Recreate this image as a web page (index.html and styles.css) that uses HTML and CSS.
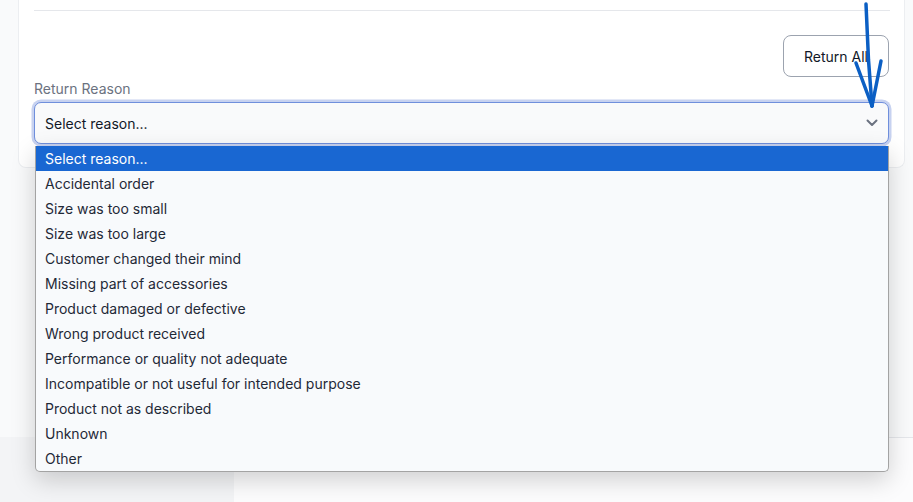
FILE: index.html
```html
<!DOCTYPE html>
<html lang="en">
<head>
<meta charset="utf-8">
<title>Return Reason</title>
<link rel="stylesheet" href="styles.css">
</head>
<body>
<div class="page">
  <div class="card">
    <div class="divider"></div>
    <div class="actions">
      <button class="btn">Return All</button>
    </div>
    <label class="label">Return Reason</label>
    <div class="select-wrap">
      <div class="select">
        <span>Select reason...</span>
        <svg class="chev" width="12" height="8" viewBox="0 0 12 8"><path d="M1.5 1.5 L6 6 L10.5 1.5" fill="none" stroke="#6b7280" stroke-width="2" stroke-linecap="round" stroke-linejoin="round"/></svg>
      </div>
      <ul class="menu">
        <li class="active">Select reason...</li>
        <li>Accidental order</li>
        <li>Size was too small</li>
        <li>Size was too large</li>
        <li>Customer changed their mind</li>
        <li>Missing part of accessories</li>
        <li>Product damaged or defective</li>
        <li>Wrong product received</li>
        <li>Performance or quality not adequate</li>
        <li>Incompatible or not useful for intended purpose</li>
        <li>Product not as described</li>
        <li>Unknown</li>
        <li>Other</li>
      </ul>
    </div>
  </div>
  <div class="lower">
    <div class="side"></div>
    <div class="panel"></div>
  </div>
  <svg class="annot" width="913" height="130" viewBox="0 0 913 130">
    <g fill="none" stroke="#0b5fc4" stroke-width="3.5" stroke-linecap="round" stroke-linejoin="round">
      <path d="M866 4 L868.5 60 L872 106"/>
      <path d="M856 63 L872 106"/>
      <path d="M881 61 L872 106"/>
    </g>
  </svg>
</div>
</body>
</html>
```
FILE: styles.css
```css
* { box-sizing: border-box; }
html, body { margin: 0; padding: 0; }
body {
  font-family: Inter, "Noto Sans", "Liberation Sans", sans-serif;
  background: #f9fafb;
  color: #111827;
}
.page {
  position: relative;
  width: 913px;
  height: 502px;
  overflow: hidden;
  background: #f9fafb;
}
.card {
  margin: 0 8px 0 18px;
  background: #fff;
  border: 1px solid #eceef1;
  border-top: none;
  border-radius: 0 0 8px 8px;
  padding: 10px 15px 23px 15px;
  height: 168px;
}
.divider {
  height: 1px;
  background: #e5e7eb;
  margin-right: -1px;
}
.actions {
  display: flex;
  justify-content: flex-end;
  margin-top: 24px;
}
.btn {
  height: 42px;
  width: 106px;
  border: 1px solid #9ca3af;
  border-radius: 8px;
  background: #fff;
  font-family: inherit;
  font-size: 14px;
  color: #111827;
  padding: 0;
}
.label {
  display: block;
  font-size: 14px;
  line-height: 20px;
  color: #6b7280;
  margin-top: 2px;
}
.select-wrap {
  position: relative;
  margin-top: 3px;
}
.select {
  height: 42px;
  border: 1px solid #6f8fdc;
  border-radius: 7px;
  background: #f9fafb;
  box-shadow: 0 0 0 2.5px #c7d2f0;
  display: flex;
  align-items: center;
  justify-content: space-between;
  padding: 0 10px 0 10px;
  font-size: 14px;
  color: #111827;
}
.chev { display: block; }
.menu {
  position: absolute;
  left: 1px;
  top: 44px;
  width: 854px;
  margin: 0;
  padding: 0;
  list-style: none;
  background: #f8fafc;
  border: 1px solid #a3a3a3;
  border-top: none;
  border-radius: 0 0 5px 5px;
  box-shadow: 0 8px 24px rgba(0,0,0,0.18);
  z-index: 5;
}
.menu li {
  height: 25px;
  line-height: 25px;
  padding-left: 9px;
  font-size: 14px;
  color: #1f2937;
  white-space: nowrap;
}
.menu li.active {
  background: #1967d2;
  color: #fff;
}
.lower {
  display: flex;
  margin-top: 269px;
  height: 65px;
}
.side {
  width: 234px;
  background: #f3f4f6;
}
.panel {
  flex: 1;
  background: #fcfcfd;
  border-top: 1px solid #e5e7eb;
}
.annot {
  position: absolute;
  left: 0;
  top: 0;
  z-index: 10;
  pointer-events: none;
}
```
